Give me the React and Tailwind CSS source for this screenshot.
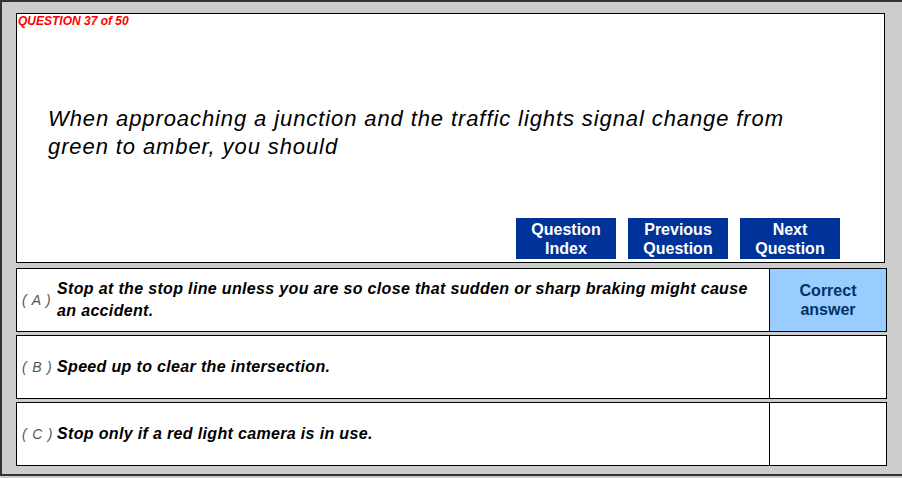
export default function App() {
  const answers = [
    { letter: "A", text: "Stop at the stop line unless you are so close that sudden or sharp braking might cause an accident.", correct: true },
    { letter: "B", text: "Speed up to clear the intersection.", correct: false },
    { letter: "C", text: "Stop only if a red light camera is in use.", correct: false },
  ];

  const buttons = [
    ["Question", "Index"],
    ["Previous", "Question"],
    ["Next", "Question"],
  ];

  return (
    <div className="w-[902px] h-[478px] bg-[#cccccc] font-['Liberation_Sans',Arial,sans-serif]">
      <div className="h-[476px] border-l-2 border-t-2 border-b-2 border-[#333333] pl-[14px] pt-[11px]">
        {/* question panel */}
        <div className="w-[869px] h-[250px] bg-white border border-black flex flex-col">
          <div className="pl-[1px] pt-[1px] text-[12px] leading-[13px] font-bold italic text-[#ff0000]">
            QUESTION 37 of 50
          </div>
          <div className="pl-[31px] pt-[77px] pr-[60px] text-[22px] leading-[28px] italic text-black tracking-[0.9px]">
            When approaching a junction and the traffic lights signal change from green to amber, you should
          </div>
          <div className="mt-auto mb-[3px] mr-[44px] flex justify-end gap-[12px]">
            {buttons.map((b, i) => (
              <div
                key={i}
                className="w-[100px] h-[41px] bg-[#003399] text-white font-bold text-[16px] leading-[19px] flex flex-col items-center justify-center"
              >
                <span>{b[0]}</span>
                <span>{b[1]}</span>
              </div>
            ))}
          </div>
        </div>

        {/* answers */}
        <div className="mt-[5px] flex flex-col gap-[3px]">
          {answers.map((a) => (
            <div key={a.letter} className="w-[871px] h-[64px] bg-white border border-black flex">
              <div className="flex-1 flex items-center pl-[5px] pr-[8px]">
                <span className="w-[35px] shrink-0 text-[14px] italic text-[#555555] whitespace-pre tracking-[0.8px]">
                  {"( " + a.letter + " )"}
                </span>
                <span className="text-[16px] leading-[22px] font-bold italic text-black tracking-[0.34px]">{a.text}</span>
              </div>
              <div
                className={
                  "w-[117px] shrink-0 border-l border-black flex flex-col items-center justify-center text-[16px] leading-[19px] font-bold text-[#003366] " +
                  (a.correct ? "bg-[#99ccff]" : "bg-white")
                }
              >
                {a.correct && (
                  <>
                    <span>Correct</span>
                    <span>answer</span>
                  </>
                )}
              </div>
            </div>
          ))}
        </div>
      </div>
    </div>
  );
}
